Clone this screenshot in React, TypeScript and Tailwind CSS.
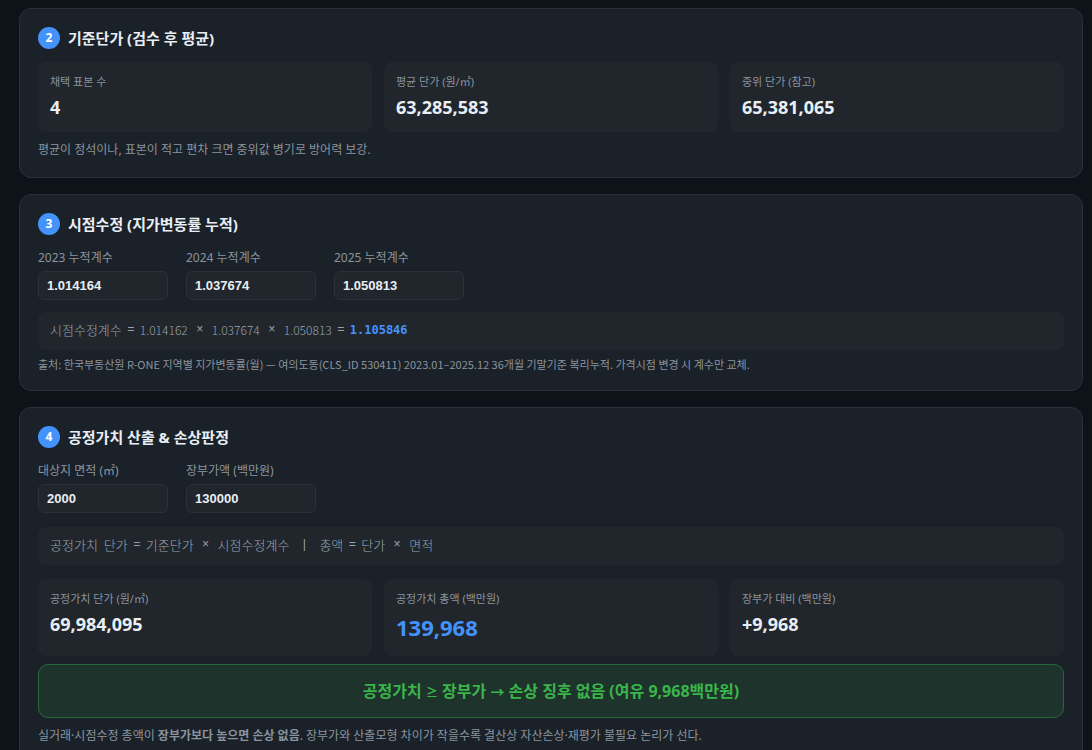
import type { ReactNode } from "react";
import clsx from "clsx";

type Metric = {
  label: string;
  value: string;
  accent?: boolean;
};

type Factor = {
  id: string;
  label: string;
  value: string;
};

const UNIT_PRICES: Metric[] = [
  { label: "채택 표본 수", value: "4" },
  { label: "평균 단가 (원/㎡)", value: "63,285,583" },
  { label: "중위 단가 (참고)", value: "65,381,065" },
];

const FACTORS: Factor[] = [
  { id: "factor-2023", label: "2023 누적계수", value: "1.014164" },
  { id: "factor-2024", label: "2024 누적계수", value: "1.037674" },
  { id: "factor-2025", label: "2025 누적계수", value: "1.050813" },
];

const SUBJECT: Factor[] = [
  { id: "area", label: "대상지 면적 (㎡)", value: "2000" },
  { id: "book-value", label: "장부가액 (백만원)", value: "130000" },
];

const FAIR_VALUES: Metric[] = [
  { label: "공정가치 단가 (원/㎡)", value: "69,984,095" },
  { label: "공정가치 총액 (백만원)", value: "139,968", accent: true },
  { label: "장부가 대비 (백만원)", value: "+9,968" },
];

function Section({
  step,
  title,
  children,
}: {
  step: number;
  title: string;
  children: ReactNode;
}) {
  return (
    <section className="rounded-xl border border-[#2a3139] bg-[#1a2129] p-[18px]">
      <h2 className="mb-[13px] flex items-center gap-2 text-[15px] leading-[22px] font-bold text-[#e9eef4]">
        <span className="flex size-[22px] shrink-0 items-center justify-center rounded-full bg-[#4493fc] text-xs text-white">
          {step}
        </span>
        {title}
      </h2>
      {children}
    </section>
  );
}

function MetricGrid({ metrics }: { metrics: Metric[] }) {
  return (
    <div className="grid grid-cols-3 gap-3">
      {metrics.map((m) => (
        <div key={m.label} className="rounded-lg bg-[#20262c] px-3 py-[10px]">
          <div className="text-[11px] leading-5 text-[#8b949e]">{m.label}</div>
          <div
            className={clsx(
              "py-px font-bold",
              m.accent
                ? "text-[22px] leading-[35px] text-[#4493fc]"
                : "text-lg leading-7 text-[#e9eef4]",
            )}
          >
            {m.value}
          </div>
        </div>
      ))}
    </div>
  );
}

function FieldRow({ fields }: { fields: Factor[] }) {
  return (
    <div className="flex flex-wrap gap-[18px]">
      {fields.map((f) => (
        <div key={f.id} className="flex w-[130px] flex-col gap-[3px]">
          <label htmlFor={f.id} className="text-xs leading-5 text-[#8b949e]">
            {f.label}
          </label>
          <input
            id={f.id}
            type="text"
            inputMode="decimal"
            defaultValue={f.value}
            className="h-[29px] w-full rounded-md border border-[#2a3139] bg-[#20262c] px-2 font-['Liberation_Sans',sans-serif] text-[13px] font-bold text-[#e9eef4] outline-none focus:border-[#4493fc]"
          />
        </div>
      ))}
    </div>
  );
}

/** One row of a formula: words, numbers and operators on a 6px rhythm. */
function Formula({ children }: { children: ReactNode }) {
  return (
    <div className="flex flex-wrap items-center gap-x-[6px] rounded-lg bg-[#20262c] px-3 pt-[9px] pb-[11px] leading-[18px] text-[#9aa3ad]">
      {children}
    </div>
  );
}

function Word({ children }: { children: ReactNode }) {
  return <span className="text-[13px] font-light">{children}</span>;
}

function Num({ children }: { children: ReactNode }) {
  return (
    <span className="flex w-12 justify-center font-['Noto_Sans_CJK_KR',sans-serif] text-xs leading-[18px] font-light">
      {children}
    </span>
  );
}

function Op({ children, wide }: { children: ReactNode; wide?: boolean }) {
  return (
    <span
      className={clsx(
        "flex justify-center font-['Liberation_Mono',monospace] text-xs leading-[18px]",
        wide ? "w-3" : "w-[6px]",
      )}
    >
      {children}
    </span>
  );
}

export default function App() {
  return (
    <main className="min-h-screen bg-[#0e131a] pt-2 pr-[9px] pb-4 pl-[19px] font-['Noto_Sans','Noto_Sans_CJK_KR',sans-serif]">
      <div className="flex flex-col gap-4">
        <Section step={2} title="기준단가 (검수 후 평균)">
          <MetricGrid metrics={UNIT_PRICES} />
          <p className="mt-[9px] text-xs leading-[18px] text-[#8b949e]">
            평균이 정석이나, 표본이 적고 편차 크면 중위값 병기로 방어력 보강.
          </p>
        </Section>

        <Section step={3} title="시점수정 (지가변동률 누적)">
          <FieldRow fields={FACTORS} />
          <div className="mt-3">
            <Formula>
              <Word>시점수정계수</Word>
              <Op>=</Op>
              <Num>1.014162</Num>
              <Op wide>×</Op>
              <Num>1.037674</Num>
              <Op wide>×</Op>
              <Num>1.050813</Num>
              <Op>=</Op>
              <b className="font-['DejaVu_Sans_Mono',monospace] text-xs leading-[18px] text-[#4493fc]">
                1.105846
              </b>
            </Formula>
          </div>
          <p className="mt-1.5 font-['Noto_Sans_CJK_KR',sans-serif] text-[11px] leading-4 text-[#8b949e]">
            출처: 한국부동산원 R-ONE 지역별 지가변동률(월) — 여의도동(CLS_ID 530411)
            2023.01–2025.12 36개월 기말기준 복리누적. 가격시점 변경 시 계수만 교체.
          </p>
        </Section>

        <Section step={4} title="공정가치 산출 & 손상판정">
          <FieldRow fields={SUBJECT} />
          <div className="my-[14px]">
            <Formula>
              <Word>공정가치</Word>
              <Word>단가</Word>
              <Op>=</Op>
              <Word>기준단가</Word>
              <Op wide>×</Op>
              <Word>시점수정계수</Word>
              <span className="mx-[6px] flex">
                <Op>|</Op>
              </span>
              <Word>총액</Word>
              <Op>=</Op>
              <Word>단가</Word>
              <Op wide>×</Op>
              <Word>면적</Word>
            </Formula>
          </div>
          <MetricGrid metrics={FAIR_VALUES} />
          <div
            role="status"
            className="mt-2 rounded-[10px] border border-[#25693a] bg-[#1f332d] px-4 py-[14px] text-center text-base leading-6 font-bold text-[#3ab54a]"
          >
            공정가치 <span className="text-xs">≥</span> 장부가{" "}
            <span className="text-sm">→</span> 손상 징후 없음 (여유 9,968백만원)
          </div>
          <p className="mt-[9px] text-xs leading-[18px] text-[#8b949e]">
            실거래·시점수정 총액이 <b>장부가보다 높으면 손상 없음</b>. 장부가와 산출모형 차이가
            작을수록 결산상 자산손상·재평가 불필요 논리가 선다.
          </p>
        </Section>
      </div>
    </main>
  );
}
